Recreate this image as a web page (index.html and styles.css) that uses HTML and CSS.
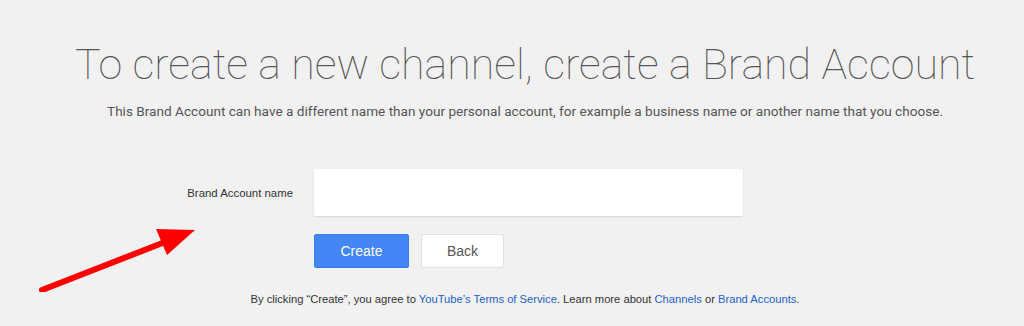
FILE: index.html
```html
<!DOCTYPE html>
<html>
<head>
<meta charset="utf-8">
<link rel="stylesheet" href="styles.css">
</head>
<body>
<main class="page">
  <h1 class="title">To create a new channel, create a Brand Account</h1>
  <p class="subtitle">This Brand Account can have a different name than your personal account, for example a business name or another name that you choose.</p>
  <div class="form">
    <div class="row">
      <label class="label" for="name">Brand Account name</label>
      <input class="input" id="name" type="text">
    </div>
    <div class="row">
      <span class="label"></span>
      <div class="buttons">
        <button class="btn btn-primary">Create</button>
        <button class="btn btn-secondary">Back</button>
      </div>
    </div>
  </div>
  <p class="footer">By clicking “Create”, you agree to <a href="#">YouTube’s Terms of Service</a>. Learn more about <a href="#">Channels</a> or <a href="#">Brand Accounts</a>.</p>
</main>
<svg class="arrow" width="180" height="80" viewBox="0 0 180 80">
  <line x1="12" y1="78" x2="135" y2="30" stroke="#ff0000" stroke-width="6" stroke-linecap="round"/>
  <polygon points="126,17 165,18 137,43" fill="#ff0000"/>
</svg>
</body>
</html>
```
FILE: styles.css
```css
html, body {
  margin: 0;
  padding: 0;
  background: #f1f1f1;
}
body {
  position: relative;
  width: 1024px;
  height: 326px;
  overflow: hidden;
  font-family: Roboto, "Liberation Sans", sans-serif;
}
.page {
  width: 1050px;
  display: flex;
  flex-direction: column;
  align-items: center;
}
.title {
  margin: 37px 0 0;
  font-weight: 100;
  font-size: 43px;
  line-height: 54px;
  color: #555;
  letter-spacing: 0;
}
.subtitle {
  margin: 10px 0 0;
  font-size: 13.6px;
  line-height: 20px;
  color: #555;
}
.form {
  margin-top: 48px;
  display: flex;
  flex-direction: column;
  gap: 18px;
  width: 1050px;
}
.row {
  display: flex;
  align-items: center;
  gap: 21px;
}
.label {
  width: 293px;
  text-align: right;
  font-family: "Liberation Sans", Arial, sans-serif;
  font-size: 11.4px;
  color: #333;
}
.input {
  box-sizing: border-box;
  width: 429px;
  height: 47px;
  border: none;
  background: #fff;
  box-shadow: 0 1px 2px rgba(0,0,0,0.12);
  margin: 0;
  border-radius: 2px;
}
.buttons {
  display: flex;
  gap: 12px;
}
.btn {
  box-sizing: border-box;
  height: 34px;
  font-family: "Liberation Sans", Arial, sans-serif;
  font-size: 14px;
  border-radius: 2px;
  padding: 0;
  margin: 0;
}
.btn-primary {
  width: 95px;
  background: #4486f6;
  color: #fff;
  border: 1px solid #3b7ef0;
}
.btn-secondary {
  width: 83px;
  background: #fff;
  color: #555;
  border: 1px solid #e0e0e0;
}
.footer {
  margin: 25px 0 0;
  font-family: "Liberation Sans", Arial, sans-serif;
  font-size: 11.2px;
  color: #333;
}
.footer a {
  color: #2161c9;
  text-decoration: none;
}
.arrow {
  position: absolute;
  left: 30px;
  top: 212px;
}
```
